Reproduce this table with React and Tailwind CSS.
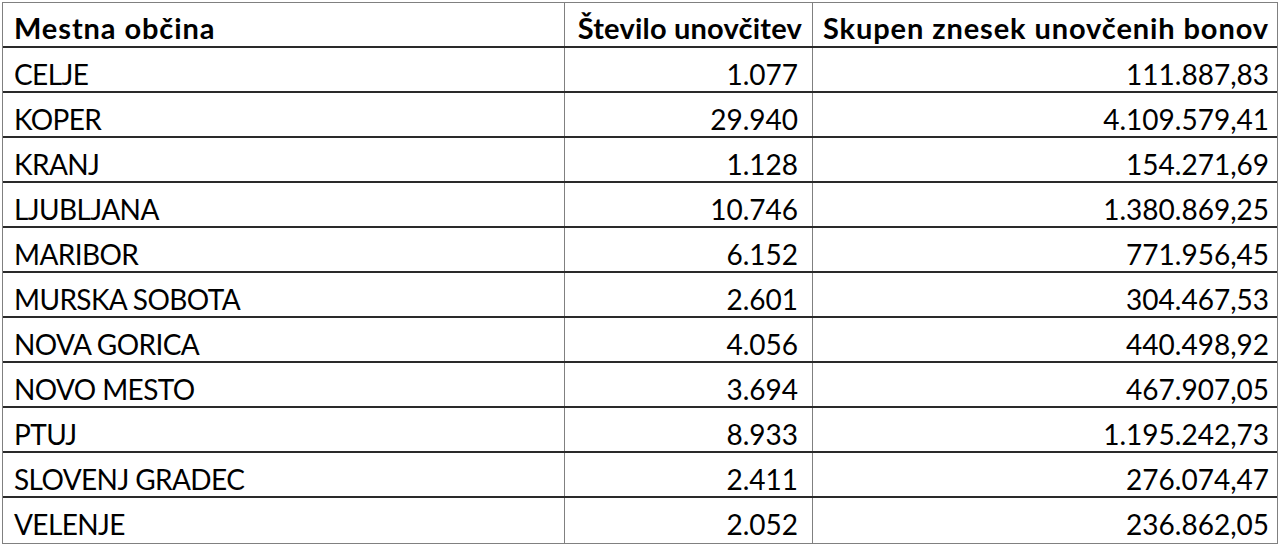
const rows = [
  ["CELJE", "1.077", "111.887,83"],
  ["KOPER", "29.940", "4.109.579,41"],
  ["KRANJ", "1.128", "154.271,69"],
  ["LJUBLJANA", "10.746", "1.380.869,25"],
  ["MARIBOR", "6.152", "771.956,45"],
  ["MURSKA SOBOTA", "2.601", "304.467,53"],
  ["NOVA GORICA", "4.056", "440.498,92"],
  ["NOVO MESTO", "3.694", "467.907,05"],
  ["PTUJ", "8.933", "1.195.242,73"],
  ["SLOVENJ GRADEC", "2.411", "276.074,47"],
  ["VELENJE", "2.052", "236.862,05"],
];

export default function App() {
  return (
    <div
      className="w-[1280px] h-[546px] bg-white pt-[2px] pl-[2px] text-black"
      style={{ fontFamily: "Lato, 'Open Sans', sans-serif" }}
    >
      <div className="w-[1276px] border border-[#808080]">
        <div className="grid grid-cols-[562px_248px_464px] h-[45px] border-b-2 border-[#2a2a2a] font-bold text-[29px] leading-[29px] tracking-[0.9px] whitespace-nowrap">
          <div className="pl-[11px] pt-[10px] border-r border-[#808080]">Mestna občina</div>
          <div className="pr-[10px] pt-[10px] text-right tracking-[0.2px] border-r border-[#808080]">Število unovčitev</div>
          <div className="pr-[8px] pt-[10px] text-right">Skupen znesek unovčenih bonov</div>
        </div>
        {rows.map((r, i) => (
          <div
            key={r[0]}
            className={
              "grid grid-cols-[562px_248px_464px] h-[45px] text-[28px] leading-[28px] " +
              (i < rows.length - 1 ? "border-b-2 border-[#2a2a2a]" : "")
            }
          >
            <div className="pl-[11px] pt-[12px] tracking-[-0.6px] border-r border-[#808080]">{r[0]}</div>
            <div className="pr-[14px] pt-[12px] text-right border-r border-[#808080]">{r[1]}</div>
            <div className="pr-[8px] pt-[12px] text-right">{r[2]}</div>
          </div>
        ))}
      </div>
    </div>
  );
}
